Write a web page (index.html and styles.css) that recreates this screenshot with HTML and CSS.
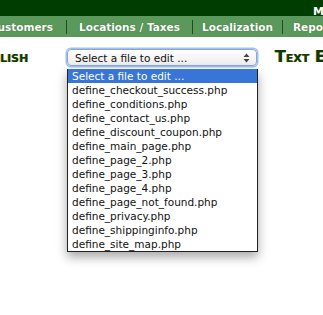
FILE: index.html
```html
<!DOCTYPE html>
<html>
<head>
<meta charset="utf-8">
<link rel="stylesheet" href="styles.css">
</head>
<body>
<div class="topbar"><span class="top-link">My Account</span></div>
<div class="nav">
  <div class="nav-inner">
    <span class="nav-item first">Customers</span>
    <span class="nav-sep"></span>
    <span class="nav-item w2">Locations / Taxes</span>
    <span class="nav-sep"></span>
    <span class="nav-item w3">Localization</span>
    <span class="nav-sep"></span>
    <span class="nav-item last">Reports</span>
  </div>
</div>
<div class="head-row">
  <div class="lang">English</div>
  <div class="select-wrap">
    <div class="select">
      <span>Select a file to edit ...</span>
      <svg class="arrows" width="7" height="10" viewBox="0 0 7 10"><path d="M0.5 4 L3.5 0.5 L6.5 4 Z M0.5 6 L3.5 9.5 L6.5 6 Z" fill="#444"/></svg>
    </div>
    <ul class="options">
      <li class="sel">Select a file to edit ...</li>
      <li>define_checkout_success.php</li>
      <li>define_conditions.php</li>
      <li>define_contact_us.php</li>
      <li>define_discount_coupon.php</li>
      <li>define_main_page.php</li>
      <li>define_page_2.php</li>
      <li>define_page_3.php</li>
      <li>define_page_4.php</li>
      <li>define_page_not_found.php</li>
      <li>define_privacy.php</li>
      <li>define_shippinginfo.php</li>
      <li>define_site_map.php</li>
    </ul>
  </div>
  <div class="title">Text Editor</div>
</div>
</body>
</html>
```
FILE: styles.css
```css
html, body {
  margin: 0;
  padding: 0;
  background: #ffffff;
  overflow: hidden;
}
body {
  font-family: "DejaVu Sans", Verdana, sans-serif;
  width: 323px;
  height: 315px;
}
.topbar {
  height: 16px;
  background: #003d00;
  padding-left: 313px;
  white-space: nowrap;
  overflow: hidden;
}
.top-link {
  color: #ffffff;
  font-weight: bold;
  font-size: 11px;
  line-height: 18px;
}
.nav {
  height: 21px;
  background: #5b985b;
  overflow: hidden;
  white-space: nowrap;
}
.nav-inner {
  display: flex;
  align-items: center;
  height: 21px;
}
.nav-item {
  flex: none;
  color: #ffffff;
  font-weight: bold;
  font-size: 10.5px;
  text-shadow: 0 0 1px rgba(0,40,0,0.5);
  overflow: hidden;
}
.nav-item.first {
  width: 66px;
  box-sizing: border-box;
  display: flex;
  justify-content: flex-end;
  padding-right: 13px;
}
.nav-item.w2 {
  width: 125px;
  text-align: center;
}
.nav-item.w3 {
  width: 89px;
  text-align: center;
}
.nav-item.last {
  padding-left: 10px;
}
.nav-sep {
  flex: none;
  width: 1px;
  height: 14px;
  background: #1d4d1d;
}
.head-row {
  display: flex;
  align-items: flex-start;
  margin-top: 12px;
  white-space: nowrap;
}
.lang, .title {
  font-variant: small-caps;
  font-weight: bold;
  font-size: 16px;
  color: #0a3a0a;
  text-shadow: -0.5px 0 0 #8a6a00;
  line-height: 16px;
}
.lang {
  margin-left: -29px;
  width: 96px;
  flex: none;
}
.title {
  margin-left: 18px;
}
.select-wrap {
  position: relative;
  width: 190px;
  flex: none;
}
.select {
  height: 15px;
  border: 1px solid #8aa6d2;
  border-radius: 4px;
  box-shadow: 0 0 0 1.5px #9fc1ef;
  background: linear-gradient(#ffffff, #ececec);
  display: flex;
  align-items: center;
  justify-content: space-between;
  padding: 0 6px 0 7px;
  font-size: 10.5px;
  color: #111;
}
.arrows {
  flex: none;
}
.options {
  position: absolute;
  left: 0;
  top: 20px;
  width: 189px;
  margin: 0;
  padding: 0;
  list-style: none;
  background: #ffffff;
  border: 1px solid #222;
  border-top: 0;
  box-shadow: 0 5px 10px rgba(0,0,0,0.35);
  font-size: 10.5px;
  color: #111;
}
.options li {
  height: 14px;
  line-height: 14px;
  padding-left: 4px;
}
.options li.sel {
  background: #3875d7;
  color: #ffffff;
}
```
